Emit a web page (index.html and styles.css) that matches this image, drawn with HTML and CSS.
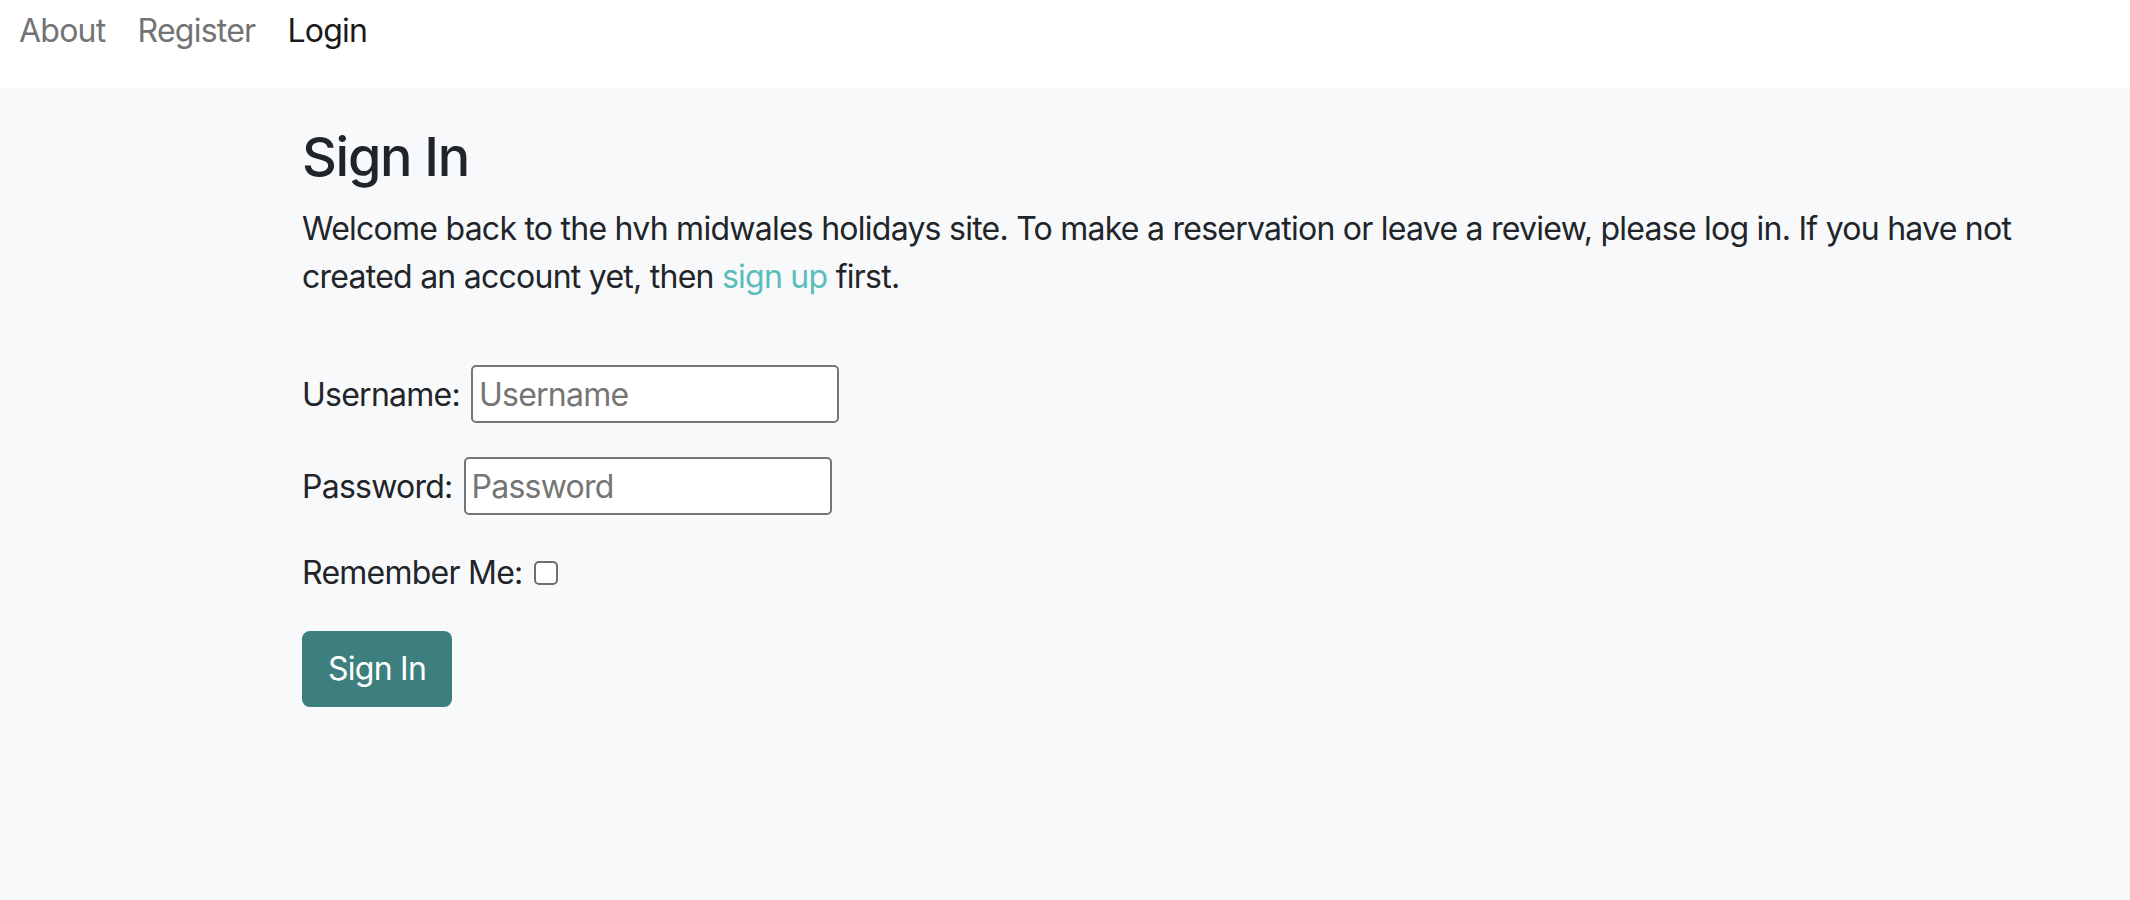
FILE: index.html
```html
<!DOCTYPE html>
<html lang="en">
<head>
<meta charset="utf-8">
<title>Sign In</title>
<link rel="stylesheet" href="styles.css">
</head>
<body>
<nav class="topnav">
  <a class="nav-link" href="#">About</a>
  <a class="nav-link" href="#">Register</a>
  <a class="nav-link active" href="#">Login</a>
</nav>
<main class="page">
  <div class="content">
    <h3 class="title">Sign In</h3>
    <p class="intro">Welcome back to the hvh midwales holidays site. To make a reservation or leave a review, please log in. If you have not created an account yet, then <a class="text-link" href="#">sign up</a> first.</p>
    <form class="login-form">
      <p class="field"><label for="u">Username:</label><input id="u" class="text-input" type="text" placeholder="Username"></p>
      <p class="field"><label for="p">Password:</label><input id="p" class="text-input" type="password" placeholder="Password"></p>
      <p class="field"><label for="r">Remember Me:</label><input id="r" class="check" type="checkbox"></p>
      <button class="btn" type="button">Sign In</button>
    </form>
  </div>
</main>
</body>
</html>
```
FILE: styles.css
```css
* { box-sizing: border-box; }
html, body { margin: 0; padding: 0; }
body {
  font-family: Inter, "Noto Sans", sans-serif;
  font-size: 32px;
  line-height: 48px;
  color: #212529;
  background: #f8f9fa;
  letter-spacing: -0.75px;
}
.topnav {
  height: 88px;
  background: #ffffff;
  display: flex;
  align-items: flex-start;
  padding: 7px 0 0 3px;
}
.nav-link {
  padding: 0 16px;
  color: #737373;
  text-decoration: none;
}
.nav-link.active { color: #1a1a1a; }
.page {
  min-height: 812px;
  padding-top: 36px;
}
.content {
  margin-left: 302px;
  width: 1760px;
}
.title {
  margin: 0 0 16px;
  font-size: 54px;
  line-height: 65px;
  font-weight: 500;
  letter-spacing: -1.3px;
}
.intro { margin: 0 0 64px; }
.text-link { color: #5bbdbb; text-decoration: none; }
.login-form { margin: 0; }
.field {
  margin: 0 0 34px;
  display: flex;
  align-items: baseline;
  gap: 11px;
}
.field label { white-space: nowrap; }
.text-input {
  width: 368px;
  height: 58px;
  border: 2px solid #767676;
  border-radius: 5px;
  background: #fff;
  font-family: inherit;
  font-size: 32px;
  letter-spacing: -0.75px;
  padding: 0 6px;
  color: #212529;
}
.text-input::placeholder { color: #757575; }
.check {
  appearance: none;
  width: 24px;
  height: 24px;
  margin: 12px 0 0;
  border: 2px solid #6e6e6e;
  border-radius: 5px;
  background: #fff;
  align-self: flex-start;
}
.btn {
  display: block;
  width: 150px;
  height: 76px;
  background: #3d7f7e;
  color: #fff;
  border: none;
  border-radius: 8px;
  font-family: inherit;
  font-size: 32px;
  line-height: 48px;
  letter-spacing: -0.75px;
  padding: 0;
}
```
